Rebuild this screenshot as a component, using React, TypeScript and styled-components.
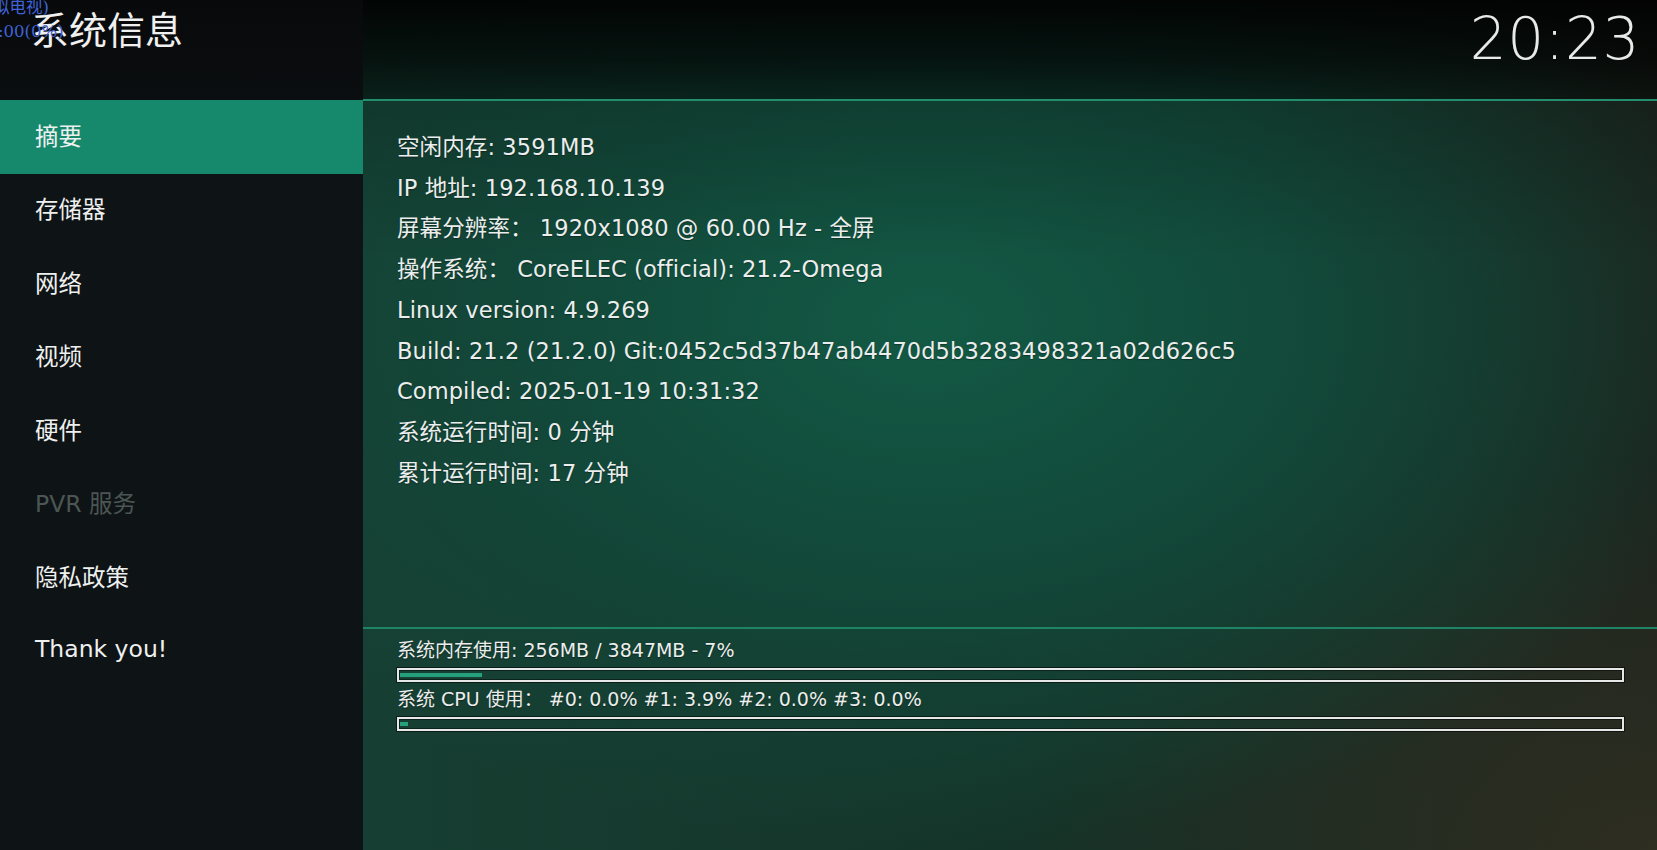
import React from "react";
import styled, { createGlobalStyle } from "styled-components";

const GlobalStyle = createGlobalStyle`
    html, body {
        margin: 0;
        padding: 0;
        width: 1657px;
        height: 850px;
        overflow: hidden;
        background: #0c1412;
    }
    * {
        box-sizing: border-box;
    }
`;

const FONT = `"DejaVu Sans", "Noto Sans CJK SC", sans-serif`;

const menuItems = [
    { label: "摘要", selected: true },
    { label: "存储器" },
    { label: "网络" },
    { label: "视频" },
    { label: "硬件" },
    { label: "PVR 服务", disabled: true },
    { label: "隐私政策" },
    { label: "Thank you!" },
];

const infoLines = [
    "空闲内存: 3591MB",
    "IP 地址: 192.168.10.139",
    "屏幕分辨率： 1920x1080 @ 60.00 Hz - 全屏",
    "操作系统： CoreELEC (official): 21.2-Omega",
    "Linux version: 4.9.269",
    "Build: 21.2 (21.2.0) Git:0452c5d37b47ab4470d5b3283498321a02d626c5",
    "Compiled: 2025-01-19 10:31:32",
    "系统运行时间: 0 分钟",
    "累计运行时间: 17 分钟",
];

export default function App() {
    return (
        <>
            <GlobalStyle />
            <Screen>
                <Sidebar>
                    <TitleBar>
                        <Title>系统信息</Title>
                    </TitleBar>
                    <Menu>
                        {menuItems.map((item) => (
                            <MenuItem
                                key={item.label}
                                $selected={item.selected}
                                $disabled={item.disabled}
                            >
                                {item.label}
                            </MenuItem>
                        ))}
                    </Menu>
                </Sidebar>

                <Main>
                    <ClockBar>
                        <Clock>20:23</Clock>
                    </ClockBar>
                    <InfoPanel>
                        {infoLines.map((line) => (
                            <InfoLine key={line}>{line}</InfoLine>
                        ))}
                    </InfoPanel>
                    <UsagePanel>
                        <UsageLabel>系统内存使用: 256MB / 3847MB - 7%</UsageLabel>
                        <Bar>
                            <BarFill style={{ width: "6.7%" }} />
                        </Bar>
                        <UsageLabel>
                            系统 CPU 使用： #0: 0.0% #1: 3.9% #2: 0.0% #3: 0.0%
                        </UsageLabel>
                        <Bar>
                            <BarFill style={{ width: "0.65%" }} />
                        </Bar>
                    </UsagePanel>
                </Main>

                <DebugOverlay>
                    <DebugLine $shift={-7}>拟电视)</DebugLine>
                    <DebugLine $shift={-2}>:00(0%)</DebugLine>
                </DebugOverlay>
            </Screen>
        </>
    );
}

const Screen = styled.div`
    position: relative;
    width: 1657px;
    height: 850px;
    display: flex;
    overflow: hidden;
    font-family: ${FONT};
    color: #eceeed;
    background:
        radial-gradient(ellipse 50% 62% at 56% 38%, #135a45 0%, #12493a 45%, rgba(16, 56, 45, 0) 100%),
        radial-gradient(ellipse 38% 45% at 100% 100%, #2e2e21 0%, rgba(40, 40, 30, 0) 100%),
        linear-gradient(to right, #173f33 20%, #153429 60%, #1c241e 100%);
`;

const Sidebar = styled.div`
    width: 363px;
    flex: none;
    display: flex;
    flex-direction: column;
    background: #0e1315;
`;

const TitleBar = styled.div`
    height: 100px;
    padding: 9px 0 0 31px;
    background: linear-gradient(to bottom, #08090b, #0b0e10);
`;

const Title = styled.div`
    font-size: 38px;
    line-height: 44px;
    color: #f0f0f0;
`;

const Menu = styled.div`
    display: flex;
    flex-direction: column;
`;

const MenuItem = styled.div`
    height: 73.5px;
    padding: 0 0 4px 35px;
    display: flex;
    align-items: center;
    font-size: 23.5px;
    color: ${(p) => (p.$disabled ? "#4b5654" : "#eef0ef")};
    background: ${(p) => (p.$selected ? "#16896d" : "transparent")};
`;

const Main = styled.div`
    flex: 1;
    display: flex;
    flex-direction: column;
`;

const ClockBar = styled.div`
    height: 101px;
    flex: none;
    display: flex;
    justify-content: flex-end;
    padding: 6px 17px 0 0;
    border-bottom: 2px solid #238e6d;
    background: linear-gradient(
        to bottom,
        rgba(0, 0, 0, 0.92) 0%,
        rgba(0, 0, 0, 0.72) 60%,
        rgba(0, 0, 0, 0.5) 100%
    );
`;

const Clock = styled.div`
    font-size: 58px;
    line-height: 66px;
    font-weight: 300;
    color: #e8eaea;
    letter-spacing: 0.6px;
`;

const InfoPanel = styled.div`
    flex: 1;
    padding: 26px 0 0 34px;
    display: flex;
    flex-direction: column;
    background: linear-gradient(to bottom, rgba(0, 0, 0, 0.16), rgba(0, 0, 0, 0) 160px);
`;

const InfoLine = styled.div`
    font-size: 22.5px;
    line-height: 40.7px;
    letter-spacing: 0.1px;
    white-space: nowrap;
    text-shadow: 0 1px 1px rgba(0, 0, 0, 0.35);
`;

const UsagePanel = styled.div`
    height: 223px;
    flex: none;
    padding: 10px 33px 0 34px;
    border-top: 2px solid #1f8465;
    display: flex;
    flex-direction: column;
`;

const UsageLabel = styled.div`
    font-size: 19px;
    line-height: 22px;
    white-space: nowrap;
    text-shadow: 0 1px 1px rgba(0, 0, 0, 0.4);
`;

const Bar = styled.div`
    height: 14px;
    margin: 7px 0 6px;
    padding: 3px 1px;
    border: 2px solid #e6e8e7;
    box-shadow: 0 0 0 1px rgba(0, 0, 0, 0.55), inset 0 0 0 1px rgba(0, 0, 0, 0.45);
`;

const BarFill = styled.div`
    height: 4px;
    background: #25a07c;
`;

const DebugOverlay = styled.div`
    position: absolute;
    top: -4px;
    left: 0;
    font-family: "DejaVu Serif", "Noto Sans CJK SC", serif;
    font-size: 16.5px;
    line-height: 24px;
    color: #3f63d8;
`;

const DebugLine = styled.div`
    margin-left: ${(p) => p.$shift}px;
    white-space: nowrap;
`;
